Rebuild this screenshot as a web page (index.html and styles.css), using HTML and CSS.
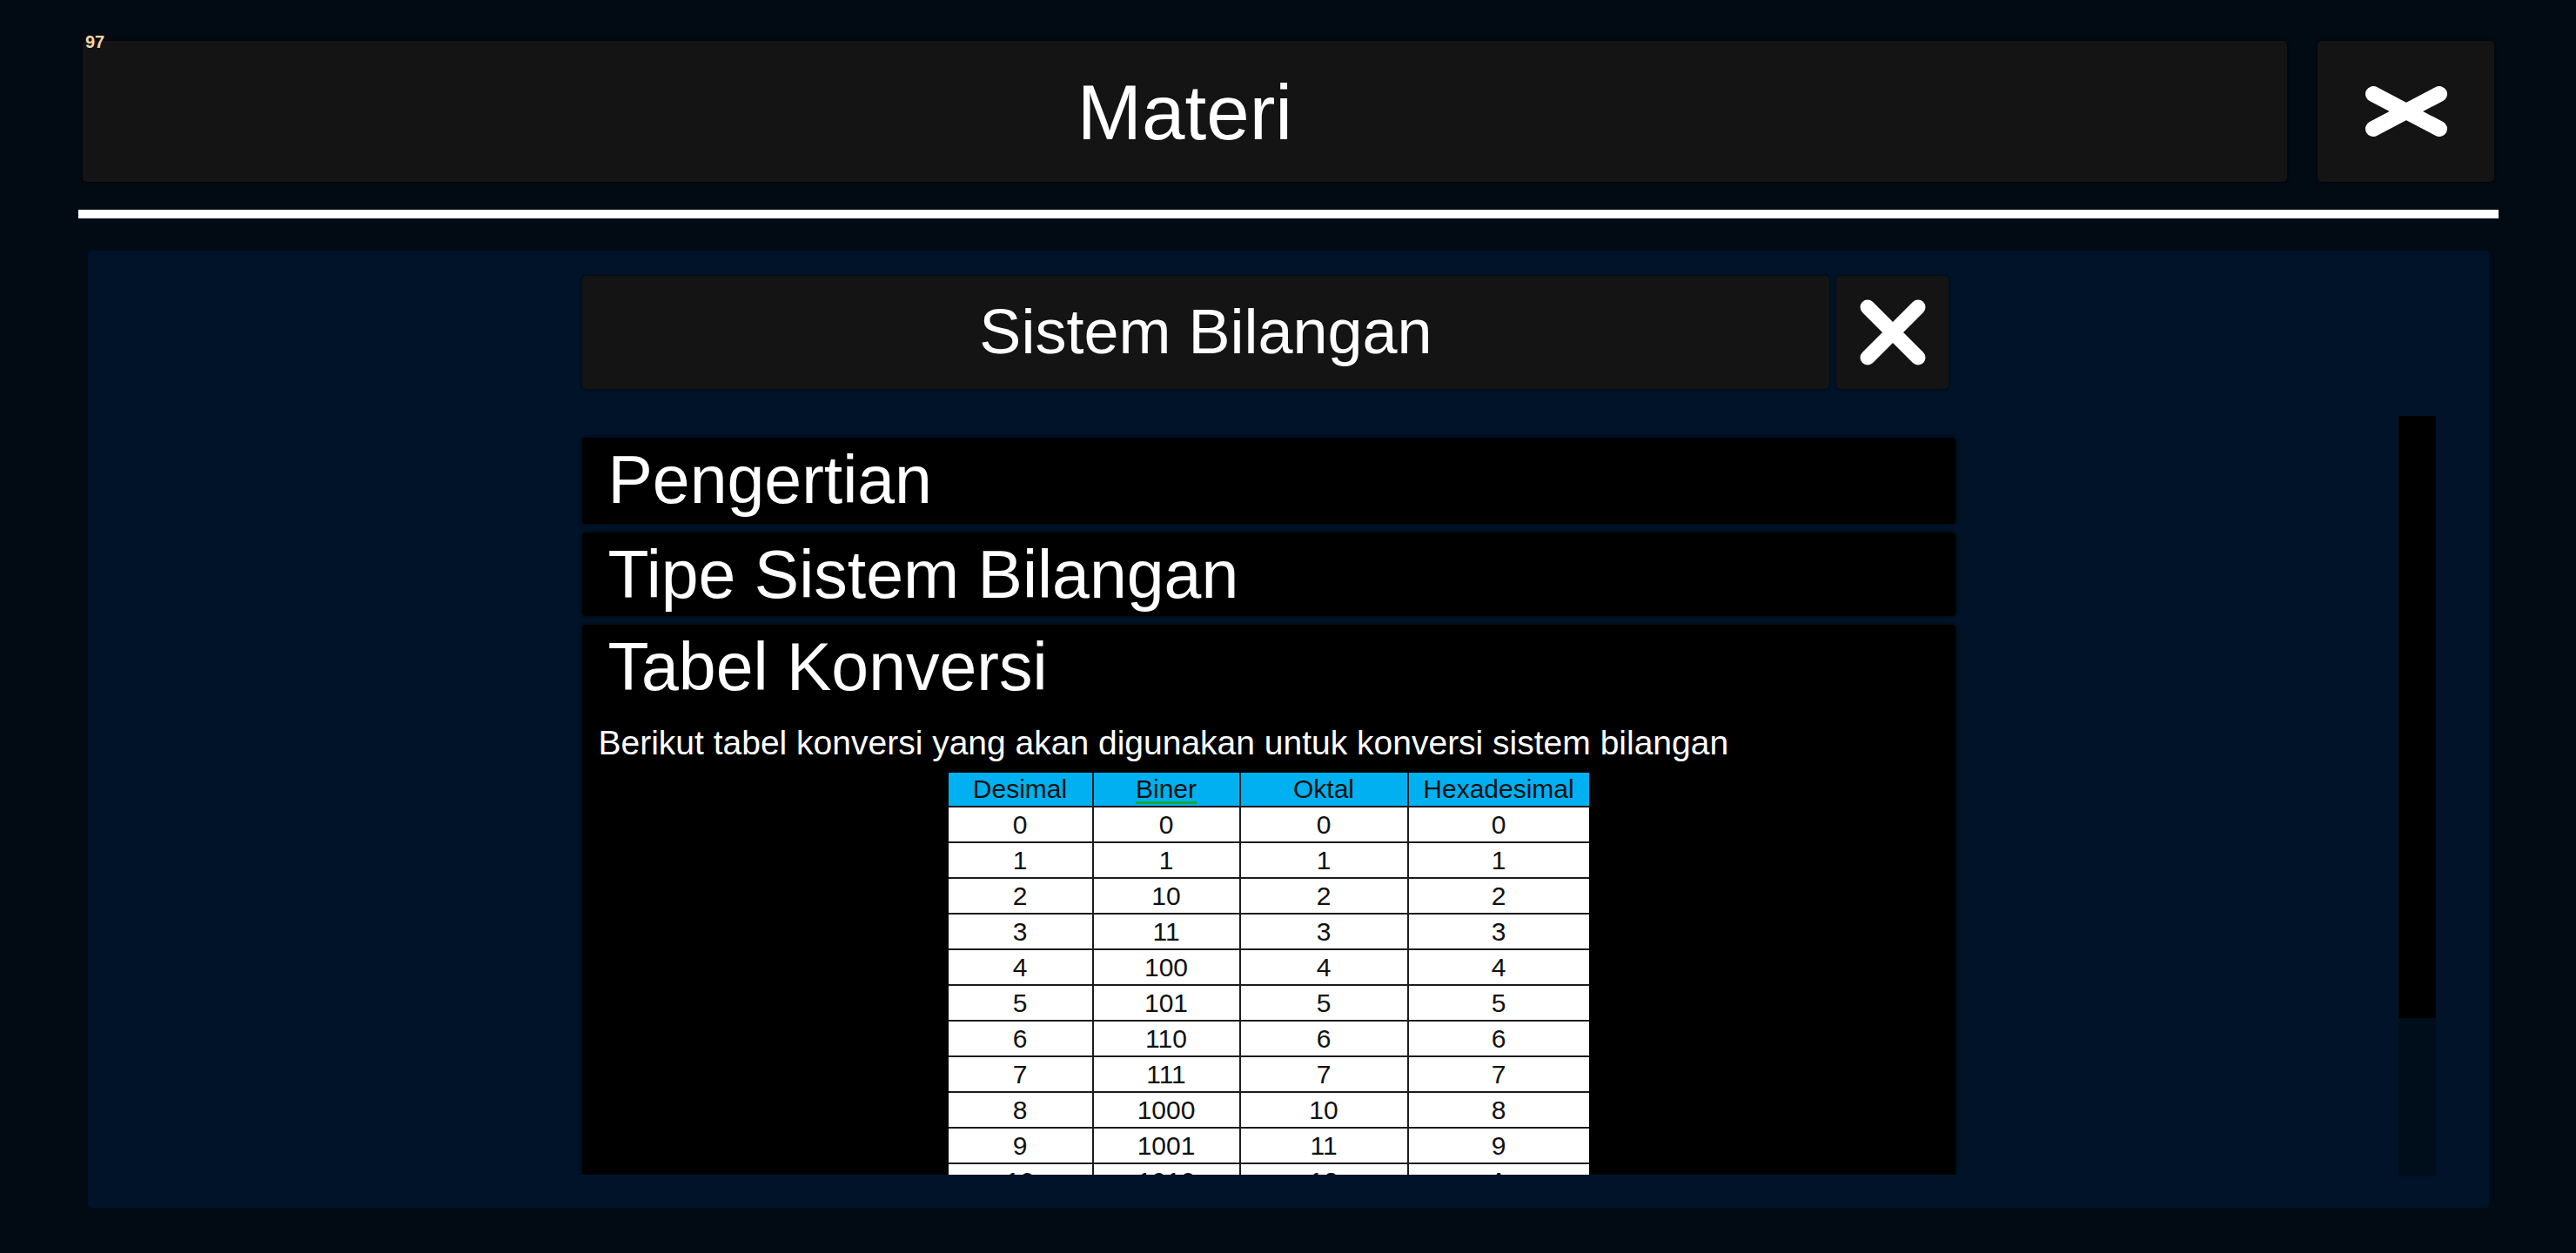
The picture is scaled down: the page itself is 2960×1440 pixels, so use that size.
FILE: index.html
```html
<!DOCTYPE html>
<html lang="id">
<head>
<meta charset="utf-8">
<title>Materi</title>
<link rel="stylesheet" href="styles.css">
</head>
<body>
<div class="fps">97</div>
<div class="app">
  <header class="topbar">
    <div class="title-box">Materi</div>
    <button class="close-big" aria-label="Tutup">
      <svg width="96" height="58" viewBox="0 0 96 58"><path d="M10 9 L86 49 M86 9 L10 49" stroke="#fff" stroke-width="18" stroke-linecap="round" fill="none"/></svg>
    </button>
  </header>
  <div class="rule"></div>
  <main class="panel">
    <div class="sub-header">
      <div class="sub-title">Sistem Bilangan</div>
      <button class="close-small" aria-label="Tutup">
        <svg width="76" height="76" viewBox="0 0 76 76"><path d="M9 9 L67 67 M67 9 L9 67" stroke="#fff" stroke-width="17" stroke-linecap="round" fill="none"/></svg>
      </button>
    </div>
    <div class="scroll">
      <div class="viewport">
        <div class="column">
          <section class="item"><h2 class="item-title">Pengertian</h2></section>
          <section class="item item-2"><h2 class="item-title">Tipe Sistem Bilangan</h2></section>
          <section class="item item-open">
            <h2 class="item-title">Tabel Konversi</h2>
            <p class="desc">Berikut tabel konversi yang akan digunakan untuk konversi sistem bilangan</p>
            <table class="conv">
              <thead>
                <tr><th>Desimal</th><th><span class="sq">Biner</span></th><th>Oktal</th><th>Hexadesimal</th></tr>
              </thead>
              <tbody>
                <tr><td>0</td><td>0</td><td>0</td><td>0</td></tr>
                <tr><td>1</td><td>1</td><td>1</td><td>1</td></tr>
                <tr><td>2</td><td>10</td><td>2</td><td>2</td></tr>
                <tr><td>3</td><td>11</td><td>3</td><td>3</td></tr>
                <tr><td>4</td><td>100</td><td>4</td><td>4</td></tr>
                <tr><td>5</td><td>101</td><td>5</td><td>5</td></tr>
                <tr><td>6</td><td>110</td><td>6</td><td>6</td></tr>
                <tr><td>7</td><td>111</td><td>7</td><td>7</td></tr>
                <tr><td>8</td><td>1000</td><td>10</td><td>8</td></tr>
                <tr><td>9</td><td>1001</td><td>11</td><td>9</td></tr>
                <tr><td>10</td><td>1010</td><td>12</td><td>A</td></tr>
                <tr><td>11</td><td>1011</td><td>13</td><td>B</td></tr>
              </tbody>
            </table>
          </section>
        </div>
      </div>
      <div class="scrollbar"><div class="thumb"></div></div>
    </div>
  </main>
</div>
</body>
</html>
```

FILE: styles.css
```css
* { box-sizing: border-box; }
html, body {
  margin: 0;
  padding: 0;
  width: 2960px;
  height: 1440px;
  overflow: hidden;
  background: #020b13;
  font-family: "Liberation Sans", Arial, sans-serif;
  color: #fff;
}
.fps {
  position: absolute;
  left: 98px;
  top: 37px;
  font-size: 20px;
  font-weight: bold;
  color: #f3d6a6;
  line-height: 22px;
  z-index: 2;
}
.app {
  padding-top: 47px;
}
.topbar {
  display: flex;
  gap: 35px;
  height: 162px;
  margin-left: 95px;
  width: 2771px;
}
.title-box {
  flex: 1;
  background: #141414;
  border-radius: 5px;
  box-shadow: 0 0 3px 1px rgba(0,0,0,0.5);
  display: flex;
  align-items: center;
  justify-content: center;
  font-size: 89px;
  padding-top: 2px;
}
.close-big {
  width: 203px;
  background: #141414;
  border: none;
  border-radius: 5px;
  box-shadow: 0 0 3px 1px rgba(0,0,0,0.5);
  display: flex;
  align-items: center;
  justify-content: center;
  padding: 0;
  padding-left: 1px;
}
.rule {
  margin-top: 32px;
  margin-left: 90px;
  width: 2781px;
  height: 10px;
  background: #fff;
}
.panel {
  margin-top: 37px;
  margin-left: 101px;
  width: 2759px;
  height: 1100px;
  background: #001328;
  border-radius: 4px;
  padding-top: 29px;
}
.sub-header {
  display: flex;
  gap: 8px;
  height: 130px;
  margin-left: 568px;
  width: 1570px;
}
.sub-title {
  flex: 1;
  background: #141414;
  border-radius: 5px;
  box-shadow: 0 0 3px 1px rgba(0,0,0,0.45);
  display: flex;
  align-items: center;
  justify-content: center;
  font-size: 72px;
  padding-bottom: 2px;
}
.close-small {
  width: 129px;
  background: #141414;
  border: none;
  border-radius: 5px;
  box-shadow: 0 0 3px 1px rgba(0,0,0,0.45);
  display: flex;
  align-items: center;
  justify-content: center;
  padding: 0;
}
.scroll {
  display: flex;
  margin-top: 31px;
  margin-left: 58px;
  width: 2640px;
  height: 874px;
}
.viewport {
  flex: 1;
  height: 872px;
  overflow: hidden;
  padding-top: 25px;
}
.column {
  width: 1578px;
  margin: 0 auto;
  display: flex;
  flex-direction: column;
  gap: 10px;
}
.item {
  background: #000;
  border-radius: 4px;
  box-shadow: 0 0 3px 2px rgba(0,0,0,0.35);
  height: 99px;
}
.item-2 { height: 96px; }
.item-open { height: auto; padding-bottom: 40px; }
.item-title {
  margin: 0;
  font-weight: normal;
  font-size: 77px;
  line-height: 97px;
  padding-left: 30px;
  white-space: nowrap;
}
.desc {
  margin: 15px 0 0 19px;
  font-size: 39px;
  line-height: 47px;
  white-space: nowrap;
}
.conv {
  margin: 11px auto 0;
  border-collapse: collapse;
  width: 736px;
  background: #fff;
  color: #111;
  font-size: 30px;
  table-layout: fixed;
}
.conv th, .conv td {
  border: 2px solid #1c1c1c;
  text-align: center;
  padding: 0;
  font-weight: normal;
  line-height: 30px;
}
.conv th {
  background: #00b0f0;
  height: 39px;
  border-top: none;
}
.conv td { height: 41px; }
.conv tr > :first-child { border-left: none; }
.conv tr > :last-child { border-right: none; }
.conv th:nth-child(1) { width: 166px; }
.conv th:nth-child(2) { width: 169px; }
.conv th:nth-child(3) { width: 193px; }
.conv th:nth-child(4) { width: 208px; }
.sq {
  text-decoration: underline;
  text-decoration-color: #14a832;
  text-decoration-thickness: 3px;
  text-underline-offset: 4px;
}
.scrollbar {
  width: 43px;
  height: 874px;
  background: #000d1b;
}
.thumb {
  height: 692px;
  background: #000;
}
```
